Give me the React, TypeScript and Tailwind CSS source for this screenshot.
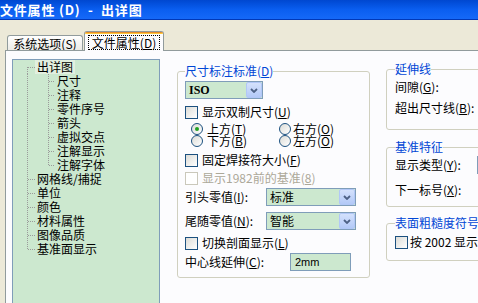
import React from "react";

const FONT = "font-['Noto_Sans_CJK_SC','Noto_Sans',sans-serif]";

function M({ c }: { c: string }) {
  return (
    <span>
      (<span className="underline">{c}</span>)
    </span>
  );
}

function Check({ disabled }: { disabled?: boolean }) {
  return disabled ? (
    <span className="block w-[13px] h-[13px] shrink-0 border border-[#CAC8BB] bg-white" />
  ) : (
    <span className="block w-[13px] h-[13px] shrink-0 border border-[#1C5180] bg-linear-to-br from-[#DCDCD7] to-white" />
  );
}

function Radio({ on }: { on?: boolean }) {
  return (
    <span className="flex w-[12px] h-[12px] shrink-0 items-center justify-center rounded-full border border-[#1C5180] bg-linear-to-br from-[#DCDCD7] to-white">
      {on && <span className="block w-[4px] h-[4px] rounded-full bg-[#21A121]" />}
    </span>
  );
}

function DropBtn() {
  return (
    <span className="flex w-[16px] h-[16px] shrink-0 items-center justify-center rounded-[2px] border border-[#B1C7F7] bg-linear-to-b from-[#D4E1FC] to-[#B3C9F7]">
      <svg width="8" height="5" viewBox="0 0 8 5">
        <path d="M1 1 L4 4 L7 1" stroke="#4D6185" strokeWidth="1.8" fill="none" />
      </svg>
    </span>
  );
}

type Row = { t: string; lvl: number; first?: boolean; last?: boolean; lastChild?: boolean; sel?: boolean };

const rows: Row[] = [
  { t: "出详图", lvl: 0, first: true, sel: true },
  { t: "尺寸", lvl: 1 },
  { t: "注释", lvl: 1 },
  { t: "零件序号", lvl: 1 },
  { t: "箭头", lvl: 1 },
  { t: "虚拟交点", lvl: 1 },
  { t: "注解显示", lvl: 1 },
  { t: "注解字体", lvl: 1, lastChild: true },
  { t: "网格线/捕捉", lvl: 0 },
  { t: "单位", lvl: 0 },
  { t: "颜色", lvl: 0 },
  { t: "材料属性", lvl: 0 },
  { t: "图像品质", lvl: 0 },
  { t: "基准面显示", lvl: 0, last: true },
];

function Connector({ r }: { r: Row }) {
  const dot = { stroke: "#9A9A9A", strokeWidth: 1, strokeDasharray: "1 1", shapeRendering: "crispEdges" as const };
  if (r.lvl === 0) {
    const y1 = r.first ? 7 : 0;
    const y2 = r.last ? 8 : 14;
    return (
      <svg width="22" height="14" className="shrink-0">
        <line x1="14.5" y1={y1} x2="14.5" y2={y2} {...dot} />
        <line x1="15" y1="7.5" x2="22" y2="7.5" {...dot} />
      </svg>
    );
  }
  return (
    <svg width="42" height="14" className="shrink-0">
      <line x1="14.5" y1="0" x2="14.5" y2="14" {...dot} />
      <line x1="35.5" y1="0" x2="35.5" y2={r.lastChild ? 8 : 14} {...dot} />
      <line x1="36" y1="7.5" x2="42" y2="7.5" {...dot} />
    </svg>
  );
}

export default function App() {
  return (
    <div className={`w-[478px] h-[303px] overflow-hidden bg-[#ECE9D8] flex flex-col text-[12px] leading-[14px] text-black ${FONT}`}>
      {/* Title bar */}
      <div className="h-[20px] shrink-0 flex items-center bg-linear-to-b from-[#0047D0] via-[#0A5EF0] to-[#1569F8] border-b border-[#0038B8]">
        <span className="text-white font-bold text-[13px] leading-[16px] whitespace-pre tracking-[0.8px]">文件属性 (D)  -  出详图</span>
      </div>

      {/* Tabs */}
      <div className="h-[30px] shrink-0 flex items-end pl-[7px]">
        <div className="w-[76px] h-[15px] flex items-center justify-center rounded-t-[3px] border border-b-0 border-[#919B9C] bg-linear-to-b from-white to-[#ECEBE6]">
          <span className="whitespace-nowrap leading-[13px]">系统选项<M c="S" /></span>
        </div>
        <div className="relative z-10 ml-[1px] -mb-[1px] w-[80px] h-[20px] flex flex-col rounded-t-[3px] border border-b-0 border-[#919B9C] bg-[#FCFCFE] overflow-hidden">
          <div className="h-[2px] shrink-0 bg-[#FFC83C] border-t border-[#E68B2C]" />
          <div className="flex-1 flex items-center justify-center">
            <span className="whitespace-nowrap border border-dotted border-black px-[3px] leading-[13px]">
              文件属性<M c="D" />
            </span>
          </div>
        </div>
      </div>

      {/* Panel */}
      <div className="flex-1 ml-[5px] border-t border-l border-[#919B9C] bg-[#FCFCFE] flex items-start">
        {/* Tree */}
        <div className="ml-[6px] mt-[8px] w-[148px] h-[260px] shrink-0 border border-[#7F9DB9] bg-[#CCE8CF] flex flex-col">
          {rows.map((r, i) => (
            <div key={i} className="h-[14px] flex items-center">
              <Connector r={r} />
              <span className={`px-[2px] whitespace-nowrap ${r.sel ? "bg-[#E2EFDF]" : ""}`}>{r.t}</span>
            </div>
          ))}
        </div>

        {/* Middle group */}
        <fieldset className="ml-[17px] mt-[13px] w-[193px] shrink-0 rounded-[3px] border border-[#D0D0BF] pl-[7px] pr-[6px] pb-[6px]">
          <legend className="text-[#0046D5] px-0 leading-[14px]">
            尺寸标注标准<M c="D" />
          </legend>
          <div className="flex flex-col">
            <div className="mt-[3px] w-[78px] h-[18px] border border-[#7F9DB9] bg-[#CCE8CF] flex items-center justify-between pl-[3px]">
              <span className="font-bold font-['Liberation_Serif',serif] text-[12px]">ISO</span>
              <DropBtn />
            </div>
            <div className="mt-[6px] h-[14px] flex items-center gap-[4px]">
              <Check />
              <span>显示双制尺寸<M c="U" /></span>
            </div>
            <div className="mt-[4px] h-[12px] flex items-center pl-[6px] leading-[12px]">
              <div className="w-[88px] flex items-center gap-[4px]">
                <Radio on />
                <span className="leading-[12px]">上方<M c="T" /></span>
              </div>
              <div className="flex items-center gap-[2px]">
                <Radio />
                <span className="leading-[12px]">右方<M c="O" /></span>
              </div>
            </div>
            <div className="h-[12px] flex items-center pl-[6px] leading-[12px]">
              <div className="w-[88px] flex items-center gap-[4px]">
                <Radio />
                <span className="leading-[12px]">下方<M c="B" /></span>
              </div>
              <div className="flex items-center gap-[2px]">
                <Radio />
                <span className="leading-[12px]">左方<M c="O" /></span>
              </div>
            </div>
            <div className="mt-[6px] h-[14px] flex items-center gap-[4px]">
              <Check />
              <span>固定焊接符大小<M c="F" /></span>
            </div>
            <div className="mt-[4px] h-[14px] flex items-center gap-[4px]">
              <Check disabled />
              <span className="text-[#ACA899]">显示1982前的基准<M c="8" /></span>
            </div>
            <div className="mt-[3px] h-[18px] flex items-center">
              <span className="w-[81px] shrink-0 whitespace-nowrap">引头零值<M c="I" />:</span>
              <div className="w-[90px] h-[18px] border border-[#7F9DB9] bg-[#CCE8CF] flex items-center justify-between pl-[3px]">
                <span>标准</span>
                <DropBtn />
              </div>
            </div>
            <div className="mt-[6px] h-[18px] flex items-center">
              <span className="w-[81px] shrink-0 whitespace-nowrap">尾随零值<M c="N" />:</span>
              <div className="w-[90px] h-[18px] border border-[#7F9DB9] bg-[#CCE8CF] flex items-center justify-between pl-[3px]">
                <span>智能</span>
                <DropBtn />
              </div>
            </div>
            <div className="mt-[6px] h-[14px] flex items-center gap-[4px]">
              <Check />
              <span>切换剖面显示<M c="L" /></span>
            </div>
            <div className="mt-[3px] h-[18px] flex items-center">
              <span className="w-[105px] shrink-0 whitespace-nowrap">中心线延伸<M c="C" />:</span>
              <div className="w-[61px] h-[18px] border border-[#7F9DB9] bg-[#CCE8CF] flex items-center pl-[4px]">
                <span className="font-['Liberation_Sans',sans-serif] text-[11px]">2mm</span>
              </div>
            </div>
          </div>
        </fieldset>

        {/* Right column */}
        <div className="ml-[16px] mt-[11px] w-[150px] shrink-0 flex flex-col">
          <fieldset className="rounded-[3px] border border-[#D0D0BF] pl-[8px] pb-[14px]">
            <legend className="text-[#0046D5] px-0 leading-[14px]">延伸线</legend>
            <div className="mt-[4px] h-[14px] flex items-center whitespace-nowrap">间隙<M c="G" />:</div>
            <div className="mt-[7px] h-[14px] flex items-center whitespace-nowrap">超出尺寸线<M c="B" />:</div>
          </fieldset>
          <fieldset className="mt-[10px] rounded-[3px] border border-[#D0D0BF] pl-[8px] pb-[9px]">
            <legend className="text-[#0046D5] px-0 leading-[14px]">基准特征</legend>
            <div className="mt-[2px] h-[18px] flex items-center">
              <span className="w-[82px] shrink-0 whitespace-nowrap">显示类型<M c="Y" />:</span>
              <div className="w-[60px] h-[18px] border border-[#7F9DB9] bg-[#CCE8CF]" />
            </div>
            <div className="mt-[9px] h-[14px] flex items-center whitespace-nowrap">下一标号<M c="X" />:</div>
          </fieldset>
          <fieldset className="mt-[9px] rounded-[3px] border border-[#D0D0BF] pl-[8px] pb-[11px]">
            <legend className="text-[#0046D5] px-0 leading-[14px] whitespace-nowrap">表面粗糙度符号</legend>
            <div className="mt-[5px] h-[14px] flex items-center gap-[2px] whitespace-nowrap">
              <Check />
              <span>按 2002 显示</span>
            </div>
          </fieldset>
        </div>
      </div>
    </div>
  );
}
